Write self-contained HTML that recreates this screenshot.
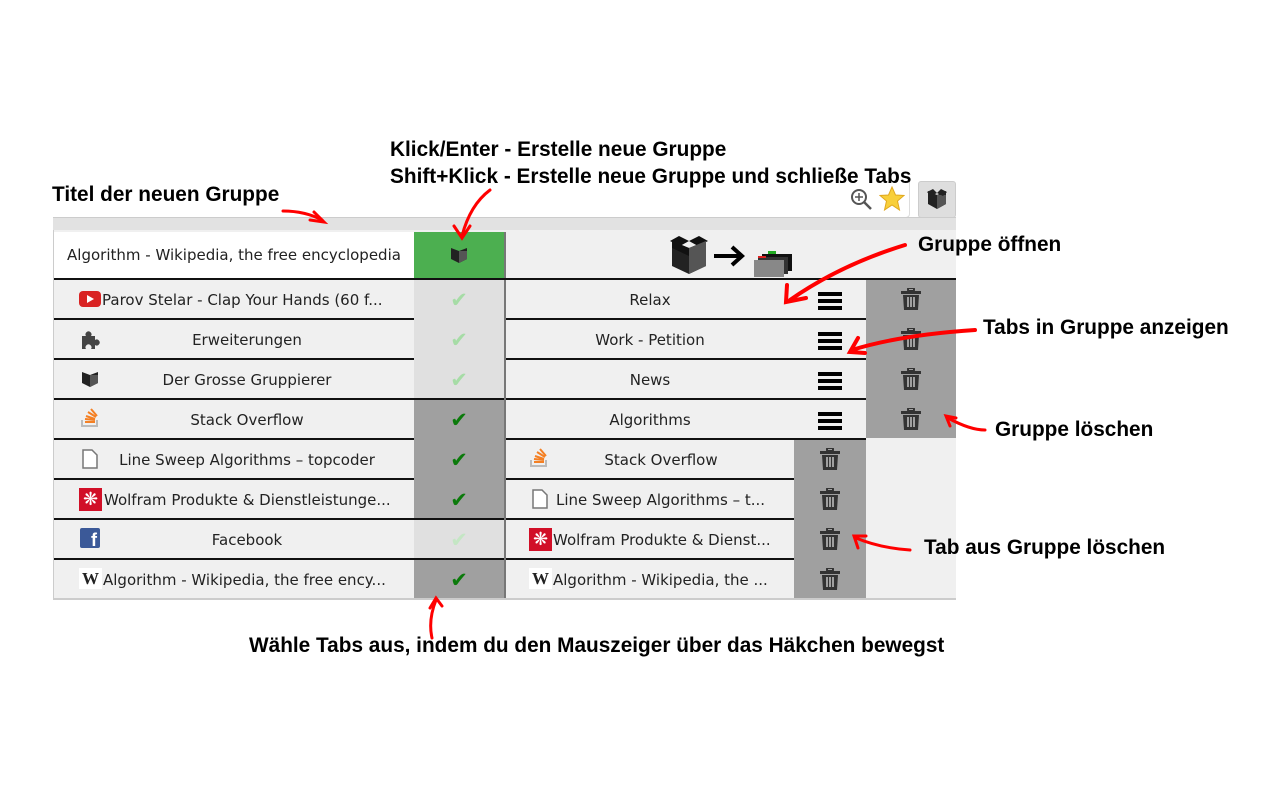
<!DOCTYPE html>
<html><head><meta charset="utf-8"><style>
*{margin:0;padding:0;box-sizing:border-box}
body{width:1280px;height:800px;background:#fff;position:relative;overflow:hidden;font-family:"DejaVu Sans","Liberation Sans",sans-serif}
.a{position:absolute}
.ann{position:absolute;font:bold 20.8px "Liberation Sans",sans-serif;color:#000;white-space:nowrap}
.t{position:absolute;font-size:15px;color:#222;white-space:nowrap;text-align:center;line-height:40px}
.row{position:absolute;height:40px;background:#f0f0f0;border-top:2px solid #111}
.ck{position:absolute;width:90px;height:40px;left:414px;text-align:center;line-height:40px;font-size:21px;font-weight:bold}
</style></head><body>
<!-- browser toolbar -->
<div class="a" style="left:53px;top:217px;width:903px;height:14px;background:#e2e2e2;border-top:1px solid #ccc"></div>
<div class="a" style="left:53px;top:180px;width:857px;height:38px;background:#fff;border-bottom-right-radius:4px;border-right:1px solid #ddd;border-bottom:1px solid #ccc"></div>
<div class="a" style="left:918px;top:181px;width:38px;height:37px;background:#dedede;border:1px solid #ccc;border-radius:3px"></div>
<svg class="a" style="left:848px;top:186px" width="26" height="26"><circle cx="11" cy="11" r="7" fill="none" stroke="#555" stroke-width="2"/><line x1="16" y1="16" x2="23" y2="23" stroke="#555" stroke-width="2.5"/><line x1="7" y1="11" x2="15" y2="11" stroke="#555" stroke-width="1.5"/><line x1="11" y1="7" x2="11" y2="15" stroke="#555" stroke-width="1.5"/></svg>
<svg class="a" style="left:879px;top:186px" width="26" height="26"><polygon points="13,1 16.5,9 25,9.5 18.5,15 20.5,24 13,19 5.5,24 7.5,15 1,9.5 9.5,9" fill="#f8cf3a" stroke="#e0a820" stroke-width="1"/></svg>
<svg class="a" style="left:926px;top:188px" width="22" height="22"><polygon points="11,7 20,3 20,16 11,21 2,16 2,3" fill="#222"/><polygon points="11,7 11,21 20,16 20,7" fill="#555"/><polygon points="1,4 7,1 11,5 5,8" fill="#222"/><polygon points="21,4 15,1 11,5 17,8" fill="#222"/></svg>
<!-- popup -->
<div class="a" style="left:53px;top:230px;width:903px;height:370px;background:#f0f0f0;border-left:1px solid #ccc;border-bottom:2px solid #ccc"></div>
<div class="a" style="left:54px;top:232px;width:360px;height:46px;background:#fff"></div>
<div class="t" style="left:54px;top:235px;width:360px">Algorithm - Wikipedia, the free encyclopedia</div>
<div class="a" style="left:414px;top:232px;width:90px;height:46px;background:#4caf50"></div>
<svg class="a" style="left:449px;top:246px" width="20" height="18"><polygon points="10,5 18,2 18,13 10,17 2,13 2,2" fill="#222"/><polygon points="10,5 10,17 18,13 18,5" fill="#555"/></svg>
<svg class="a" style="left:668px;top:236px" width="126" height="42"><polygon points="2,5 11,0 21,5 12,10" fill="#111"/><polygon points="40,5 31,0 21,5 30,10" fill="#111"/><polygon points="21,12 4,5 4,30 21,38 38,30 38,5" fill="#222"/><polygon points="21,12 21,38 38,30 38,5" fill="#555"/><polygon points="4,12 21,20 21,12 4,5" fill="#111"/><line x1="46" y1="20" x2="72" y2="20" stroke="#000" stroke-width="4"/><polyline points="64,11 74,20 64,29" fill="none" stroke="#000" stroke-width="4"/><rect x="94" y="18" width="30" height="17" fill="#111"/><rect x="90" y="21" width="30" height="17" fill="#333"/><rect x="86" y="24" width="30" height="17" fill="#888"/><rect x="100" y="15" width="8" height="3" fill="#2a2"/><rect x="90" y="20" width="8" height="2" fill="#d22"/></svg>
<!-- rows -->
<div class="row" style="left:54px;top:278px;width:812px"></div>
<div class="row" style="left:54px;top:318px;width:812px"></div>
<div class="row" style="left:54px;top:358px;width:812px"></div>
<div class="row" style="left:54px;top:398px;width:812px"></div>
<div class="row" style="left:54px;top:438px;width:812px"></div>
<div class="row" style="left:54px;top:478px;width:812px"></div>
<div class="row" style="left:54px;top:518px;width:812px"></div>
<div class="row" style="left:54px;top:558px;width:812px;border-bottom:0"></div>
<div class="a" style="left:866px;top:278px;width:90px;height:160px;background:#a0a0a0;border-top:2px solid #111"></div>
<div class="a" style="left:794px;top:440px;width:72px;height:158px;background:#a0a0a0"></div>
<div class="a" style="left:504px;top:232px;width:2px;height:366px;background:#777"></div>
<!-- check column -->
<div class="ck" style="top:280px;height:118px;background:#e0e0e0"></div>
<div class="ck" style="top:400px;height:118px;background:#a0a0a0"></div>
<div class="ck" style="top:520px;height:38px;background:#e0e0e0"></div>
<div class="ck" style="top:560px;height:38px;background:#a0a0a0"></div>
<div class="a" style="left:414px;top:278px;width:92px;height:2px;background:#111"></div>
<div class="ck" style="top:280px;color:#a6dca6">✔</div>
<div class="ck" style="top:320px;color:#a6dca6">✔</div>
<div class="ck" style="top:360px;color:#a6dca6">✔</div>
<div class="ck" style="top:400px;color:#0b7a0b">✔</div>
<div class="ck" style="top:440px;color:#0b7a0b">✔</div>
<div class="ck" style="top:480px;color:#0b7a0b">✔</div>
<div class="ck" style="top:520px;color:#c4e6c4">✔</div>
<div class="ck" style="top:560px;color:#0b7a0b">✔</div>
<!-- left texts -->
<div class="t" style="left:102px;top:280px;text-align:left">Parov Stelar - Clap Your Hands (60 f...</div>
<div class="t" style="left:80px;top:320px;width:334px">Erweiterungen</div>
<div class="t" style="left:80px;top:360px;width:334px">Der Grosse Gruppierer</div>
<div class="t" style="left:80px;top:400px;width:334px">Stack Overflow</div>
<div class="t" style="left:80px;top:440px;width:334px">Line Sweep Algorithms – topcoder</div>
<div class="t" style="left:104px;top:480px;text-align:left">Wolfram Produkte &amp; Dienstleistunge...</div>
<div class="t" style="left:80px;top:520px;width:334px">Facebook</div>
<div class="t" style="left:103px;top:560px;text-align:left">Algorithm - Wikipedia, the free ency...</div>
<!-- left favicons -->
<div class="a" style="left:79px;top:291px;width:22px;height:16px;background:#d92323;border-radius:4px"></div><div class="a" style="left:87px;top:295px;border-left:7px solid #fff;border-top:4px solid transparent;border-bottom:4px solid transparent"></div>
<svg class="a" style="left:80px;top:330px" width="20" height="20"><path d="M2 6h4a3 3 0 1 1 5 0h4v4a3 3 0 1 1 0 5v4H11a3 3 0 1 0-5 0H2z" fill="#444"/></svg>
<svg class="a" style="left:80px;top:370px" width="20" height="18"><polygon points="10,5 18,2 18,13 10,17 2,13 2,2" fill="#222"/><polygon points="10,5 10,17 18,13 18,5" fill="#555"/></svg>
<svg class="a" style="left:80px;top:407px" width="20" height="22"><path d="M2 13v6h15v-6" fill="none" stroke="#bbb" stroke-width="2"/><path d="M5 15h10M5 12l10 1M6 9l9 3M8 5l8 5M11 2l6 7" stroke="#f48024" stroke-width="2"/></svg>
<svg class="a" style="left:82px;top:449px" width="16" height="20"><path d="M1 1h9l5 5v13H1z" fill="#fff" stroke="#777" stroke-width="1.5"/></svg>
<div class="a" style="left:79px;top:488px;width:23px;height:23px;background:#d10f27;color:#fff;font-size:18px;line-height:23px;text-align:center">❋</div>
<div class="a" style="left:80px;top:528px;width:20px;height:20px;background:#3b5998;border-radius:2px;color:#fff;font:bold 18px 'Liberation Sans';text-align:right;padding-right:3px;line-height:24px">f</div>
<div class="a" style="left:79px;top:568px;width:23px;height:21px;background:#fff;font:bold 17px 'Liberation Serif';color:#222;text-align:center;line-height:22px">W</div>
<!-- groups -->
<div class="t" style="left:506px;top:280px;width:288px">Relax</div>
<div class="t" style="left:506px;top:320px;width:288px">Work - Petition</div>
<div class="t" style="left:506px;top:360px;width:288px">News</div>
<div class="t" style="left:506px;top:400px;width:288px">Algorithms</div>
<!-- hamburgers -->
<svg class="a" style="left:818px;top:290px" width="24" height="22"><rect y="2" width="24" height="4" fill="#000"/><rect y="9" width="24" height="4" fill="#000"/><rect y="16" width="24" height="4" fill="#000"/></svg>
<svg class="a" style="left:818px;top:330px" width="24" height="22"><rect y="2" width="24" height="4" fill="#000"/><rect y="9" width="24" height="4" fill="#000"/><rect y="16" width="24" height="4" fill="#000"/></svg>
<svg class="a" style="left:818px;top:370px" width="24" height="22"><rect y="2" width="24" height="4" fill="#000"/><rect y="9" width="24" height="4" fill="#000"/><rect y="16" width="24" height="4" fill="#000"/></svg>
<svg class="a" style="left:818px;top:410px" width="24" height="22"><rect y="2" width="24" height="4" fill="#000"/><rect y="9" width="24" height="4" fill="#000"/><rect y="16" width="24" height="4" fill="#000"/></svg>
<!-- trash icons -->
<svg width="0" height="0" style="position:absolute"><defs><g id="tr"><rect x="7" y="0" width="6" height="3" rx="1" fill="none" stroke="#333" stroke-width="2"/><rect x="0" y="3" width="20" height="3" fill="#333"/><path d="M2 7h16l-1 15H3z" fill="#333"/><rect x="6" y="9" width="2" height="10" fill="#a0a0a0"/><rect x="9" y="9" width="2" height="10" fill="#a0a0a0"/><rect x="12" y="9" width="2" height="10" fill="#a0a0a0"/></g></defs></svg>
<svg class="a" style="left:901px;top:288px" width="20" height="23"><use href="#tr"/></svg>
<svg class="a" style="left:901px;top:328px" width="20" height="23"><use href="#tr"/></svg>
<svg class="a" style="left:901px;top:368px" width="20" height="23"><use href="#tr"/></svg>
<svg class="a" style="left:901px;top:408px" width="20" height="23"><use href="#tr"/></svg>
<svg class="a" style="left:820px;top:448px" width="20" height="23"><use href="#tr"/></svg>
<svg class="a" style="left:820px;top:488px" width="20" height="23"><use href="#tr"/></svg>
<svg class="a" style="left:820px;top:528px" width="20" height="23"><use href="#tr"/></svg>
<svg class="a" style="left:820px;top:568px" width="20" height="23"><use href="#tr"/></svg>
<!-- tab list right -->
<div class="t" style="left:555px;top:440px;width:212px">Stack Overflow</div>
<div class="t" style="left:556px;top:480px;text-align:left">Line Sweep Algorithms – t...</div>
<div class="t" style="left:553px;top:520px;text-align:left">Wolfram Produkte &amp; Dienst...</div>
<div class="t" style="left:553px;top:560px;text-align:left">Algorithm - Wikipedia, the ...</div>
<svg class="a" style="left:529px;top:447px" width="20" height="22"><path d="M2 13v6h15v-6" fill="none" stroke="#bbb" stroke-width="2"/><path d="M5 15h10M5 12l10 1M6 9l9 3M8 5l8 5M11 2l6 7" stroke="#f48024" stroke-width="2"/></svg>
<svg class="a" style="left:532px;top:489px" width="16" height="20"><path d="M1 1h9l5 5v13H1z" fill="#fff" stroke="#777" stroke-width="1.5"/></svg>
<div class="a" style="left:529px;top:528px;width:23px;height:23px;background:#d10f27;color:#fff;font-size:18px;line-height:23px;text-align:center">❋</div>
<div class="a" style="left:529px;top:568px;width:23px;height:21px;background:#fff;font:bold 17px 'Liberation Serif';color:#222;text-align:center;line-height:22px">W</div>
<!-- annotations -->
<div class="ann" style="left:390px;top:138px">Klick/Enter - Erstelle neue Gruppe</div>
<div class="ann" style="left:390px;top:165px">Shift+Klick - Erstelle neue Gruppe und schließe Tabs</div>
<div class="ann" style="left:52px;top:183px">Titel der neuen Gruppe</div>
<div class="ann" style="left:918px;top:233px">Gruppe öffnen</div>
<div class="ann" style="left:983px;top:316px">Tabs in Gruppe anzeigen</div>
<div class="ann" style="left:995px;top:418px">Gruppe löschen</div>
<div class="ann" style="left:924px;top:536px">Tab aus Gruppe löschen</div>
<div class="ann" style="left:249px;top:634px">Wähle Tabs aus, indem du den Mauszeiger über das Häkchen bewegst</div>
<!-- red arrows -->
<svg class="a" style="left:0;top:0" width="1280" height="800" fill="none" stroke="#f00" stroke-linecap="round">
<path d="M283 211 Q305 211 322 220" stroke-width="3"/><path d="M314 212 L324 222 L310 220" stroke-width="3"/>
<path d="M490 190 Q470 205 462 236" stroke-width="3"/><path d="M454 226 L462 238 L470 226" stroke-width="3"/>
<path d="M905 245 Q840 265 790 300" stroke-width="4"/><path d="M787 285 L786 302 L806 298" stroke-width="4"/>
<path d="M975 330 Q900 335 852 350" stroke-width="4"/><path d="M858 338 L850 352 L865 353" stroke-width="4"/>
<path d="M985 430 Q970 430 948 418" stroke-width="3"/><path d="M950 426 L946 416 L956 418" stroke-width="3"/>
<path d="M910 550 Q880 548 856 538" stroke-width="3"/><path d="M858 548 L854 536 L866 536" stroke-width="3"/>
<path d="M432 638 Q428 620 436 600" stroke-width="3"/><path d="M430 608 L436 598 L442 606" stroke-width="3"/>
</svg>
</body></html>
